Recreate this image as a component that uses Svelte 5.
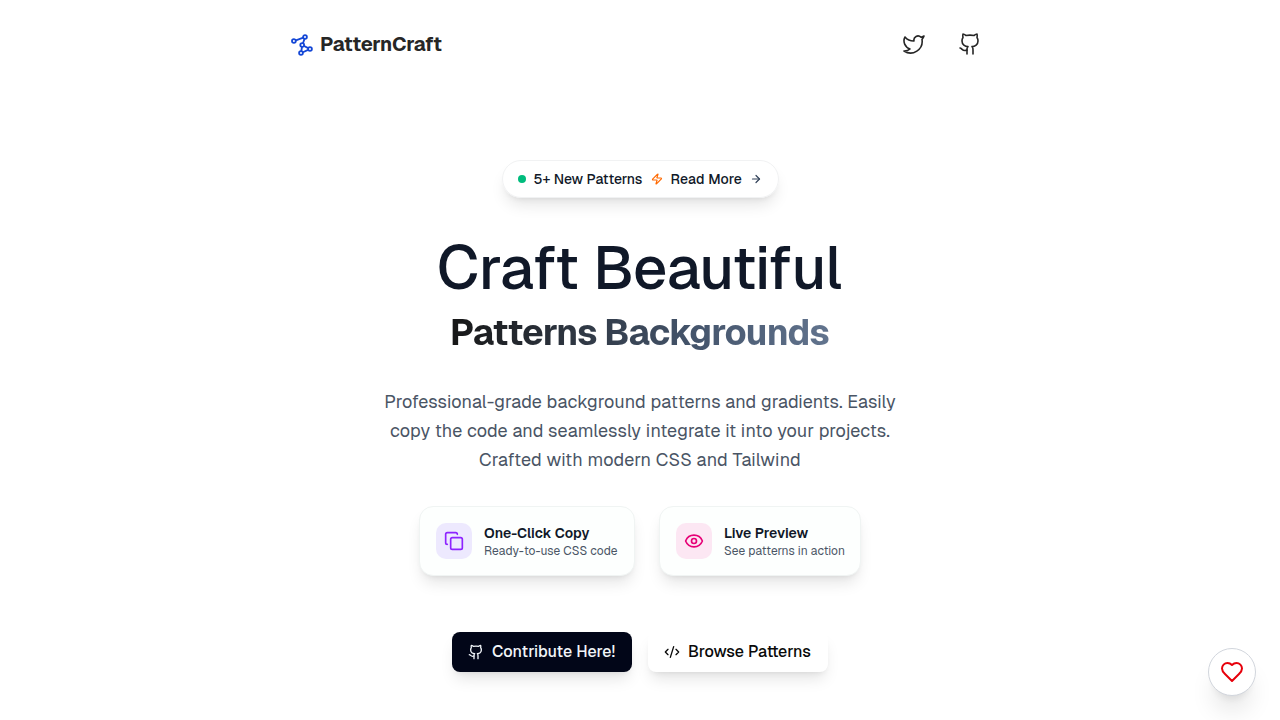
<script>
  const github = [
    'M15 22v-4a4.8 4.8 0 0 0-1-3.5c3 0 6-2 6-5.5.08-1.25-.27-2.48-1-3.5.28-1.15.28-2.35 0-3.5 0 0-1 0-3 1.5-2.64-.5-5.36-.5-8 0C6 2 5 2 5 2c-.3 1.15-.3 2.35 0 3.5A5.403 5.403 0 0 0 4 9c0 3.5 3 5.5 6 5.5-.39.49-.68 1.05-.85 1.65-.17.6-.22 1.23-.15 1.85v4',
    'M9 18c-4.51 2-5-2-7-2'
  ];
  const twitter = ['M22 4s-.7 2.1-2 3.4c1.6 10-9.4 17.3-18 11.6 2.2.1 4.4-.6 6-2C3 15.5.5 9.6 3 5c2.2 2.6 5.6 4.1 9 4-.9-4.2 4-6.6 7-3.8 1.1 0 3-1.2 3-1.2z'];
  const zap = ['M4 14a1 1 0 0 1-.78-1.63l9.9-10.2a.5.5 0 0 1 .86.46l-1.92 6.02A1 1 0 0 0 13 10h7a1 1 0 0 1 .78 1.63l-9.9 10.2a.5.5 0 0 1-.86-.46l1.92-6.02A1 1 0 0 0 11 14z'];
  const arrow = ['M5 12h14', 'm12 5 7 7-7 7'];
  const copy = ['M10 8h10a2 2 0 0 1 2 2v10a2 2 0 0 1-2 2H10a2 2 0 0 1-2-2V10a2 2 0 0 1 2-2z', 'M4 16c-1.1 0-2-.9-2-2V4c0-1.1.9-2 2-2h10c1.1 0 2 .9 2 2'];
  const eye = ['M2.062 12.348a1 1 0 0 1 0-.696 10.75 10.75 0 0 1 19.876 0 1 1 0 0 1 0 .696 10.75 10.75 0 0 1-19.876 0', 'M9 12a3 3 0 1 0 6 0a3 3 0 1 0-6 0'];
  const code = ['m18 16 4-4-4-4', 'm6 8-4 4 4 4', 'm14.5 4-5 16'];
  const heart = ['M19 14c1.49-1.46 3-3.21 3-5.5A5.5 5.5 0 0 0 16.5 3c-1.76 0-3 .5-4.5 2-1.5-1.5-2.74-2-4.5-2A5.5 5.5 0 0 0 2 8.5c0 2.3 1.5 4.05 3 5.5l7 7Z'];
</script>

{#snippet icon(paths, size, width = 2)}
  <svg width={size} height={size} viewBox="0 0 24 24" fill="none" stroke="currentColor" stroke-width={width} stroke-linecap="round" stroke-linejoin="round" aria-hidden="true">
    {#each paths as d}<path {d} />{/each}
  </svg>
{/snippet}

<div class="page">
  <header>
    <div class="brand">
      <svg width="24" height="24" viewBox="0 0 24 24" fill="none" stroke="currentColor" stroke-width="1.8" aria-hidden="true">
        <circle cx="3.9" cy="9" r="1.9" /><circle cx="15" cy="5" r="1.9" /><circle cx="12.2" cy="13" r="1.9" /><circle cx="20" cy="17" r="1.9" /><circle cx="11" cy="21" r="1.9" />
        <path d="M5.9 8.3l7.4-2.6M14.5 6.9l-1.5 4.3M14.1 14l4.1 2.1M12 15l-.7 4M12.9 20.2l5.2-2.3" />
      </svg>
      <span>PatternCraft</span>
    </div>
    <nav>{@render icon(twitter, 24, 1.6)}{@render icon(github, 24, 1.6)}</nav>
  </header>

  <main>
    <div class="pill">
      <i></i><span class="new">5+ New Patterns</span>
      <span class="zap">{@render icon(zap, 12, 2.4)}</span>
      <span class="read">Read More</span>
      <span class="arrow">{@render icon(arrow, 12, 2.4)}</span>
    </div>
    <h1><span>Craft</span> <span class="wide">Beautiful</span></h1>
    <h2><span>Patterns Backgrounds</span></h2>
    <p class="intro">
      <span>Professional-grade background patterns and gradients. Easily</span>
      <span>copy the code and seamlessly integrate it into your projects.</span>
      <span class="last">Crafted with modern CSS and Tailwind</span>
    </p>
    <div class="cards">
      <div class="card first">
        <div class="tile violet">{@render icon(copy, 20)}</div>
        <div><h3>One-Click Copy</h3><p>Ready-to-use CSS code</p></div>
      </div>
      <div class="card second">
        <div class="tile pink">{@render icon(eye, 20)}</div>
        <div><h3>Live Preview</h3><p>See patterns in action</p></div>
      </div>
    </div>
    <div class="actions">
      <button class="dark">{@render icon(github, 16, 2)}<span>Contribute Here!</span></button>
      <button class="light">{@render icon(code, 16)}<span>Browse Patterns</span></button>
    </div>
  </main>
  <button class="heart" aria-label="Favourites">{@render icon(heart, 24)}</button>
</div>

<style>
  :global(body) { background: #fff; overflow: hidden; }
  .page { height: 720px; overflow: hidden; font-family: Geist, Inter, "Liberation Sans", sans-serif; color: #101828; }
  .page * { box-sizing: border-box; }
  svg { display: block; flex: none; }
  h1, h2, h3, p { margin: 0; }
  button { font: inherit; border: 0; }
  span { white-space: nowrap; }
  header { width: 700px; height: 88px; margin: 0 auto; padding: 0 8px 0 0; display: flex; align-items: center; justify-content: space-between; }
  .brand { display: flex; align-items: center; gap: 6px; font-size: 20px; font-weight: 700; line-height: 28px; letter-spacing: -0.25px; color: #262626; }
  .brand svg { color: #1447d6; }
  nav { display: flex; gap: 32px; color: #262626; }
  main { display: flex; flex-direction: column; align-items: center; padding-top: 72px; }
  .pill { width: 277px; height: 38px; border: 1px solid #f1f2f3; border-radius: 19px; padding: 0 15px; display: flex; align-items: center; font-size: 14px; font-weight: 500; box-shadow: 0 10px 15px -3px #0000001a, 0 4px 6px -4px #0000001a; }
  .pill i { width: 8px; height: 8px; border-radius: 50%; background: #00bc7d; margin-right: 8px; }
  .new { width: 109px; letter-spacing: -0.03px; }
  .zap { color: #ff6900; margin: 0 8px; }
  .read { width: 71px; letter-spacing: 0.1px; }
  .arrow { margin-left: 8px; color: #314158; }
  h1 { margin-top: 40px; font-size: 60px; line-height: 60px; font-weight: 500; letter-spacing: -0.2px; white-space: nowrap; padding-right: 2px; }
  .wide { letter-spacing: -1px; }
  h2 { margin-top: 11px; font-size: 36px; line-height: 48px; font-weight: 700; letter-spacing: -0.74px; white-space: nowrap; padding-right: 1px; }
  h2 span { background: linear-gradient(90deg, #171717, #45556c 65%, #62748e); background-clip: text; -webkit-background-clip: text; color: transparent; }
  .intro { margin-top: 30px; display: flex; flex-direction: column; align-items: center; font-size: 18px; line-height: 29px; letter-spacing: 0.1px; color: #4a5565; }
  .last { letter-spacing: 0.16px; }
  .cards { display: flex; gap: 24px; margin-top: 32px; }
  .card { height: 70px; display: flex; align-items: center; gap: 12px; border: 1px solid #f0f4f3; border-radius: 14px; padding: 0 16px; background: #fdfffe; box-shadow: 0 10px 15px -3px #0000001a, 0 4px 6px -4px #0000001a; white-space: nowrap; }
  .first { width: 216px; }
  .second { width: 202px; }
  .tile { width: 36px; height: 36px; border-radius: 10px; display: grid; place-items: center; flex: none; }
  .violet { background: #ede9fe; color: #8e24ff; }
  .pink { background: #fce7f3; color: #e60076; }
  h3 { font-size: 14px; line-height: 20px; font-weight: 600; }
  .card p { font-size: 12px; line-height: 16px; letter-spacing: 0.05px; color: #4a5565; }
  .second p { letter-spacing: 0.02px; }
  .actions { display: flex; gap: 16px; margin-top: 56px; }
  .actions button { height: 40px; width: 180px; padding: 0 16px; display: flex; align-items: center; gap: 8px; border-radius: 8px; font-size: 16px; font-weight: 500; letter-spacing: 0.05px; box-shadow: 0 10px 15px -3px #0000001a, 0 4px 6px -4px #0000001a; }
  .actions span { padding-bottom: 2px; }
  .actions .dark { background: #020618; color: #f1f5f9; }
  .actions .light { background: #fff; color: #0a0a0a; letter-spacing: 0; }
  .heart { position: fixed; right: 24px; bottom: 24px; width: 48px; height: 48px; border: 1px solid #d1d5dc; border-radius: 50%; background: #fff; color: #e7000b; display: grid; place-items: center; padding: 0; box-shadow: 0 20px 25px -5px #0000001a, 0 8px 10px -6px #0000001a; }
</style>
